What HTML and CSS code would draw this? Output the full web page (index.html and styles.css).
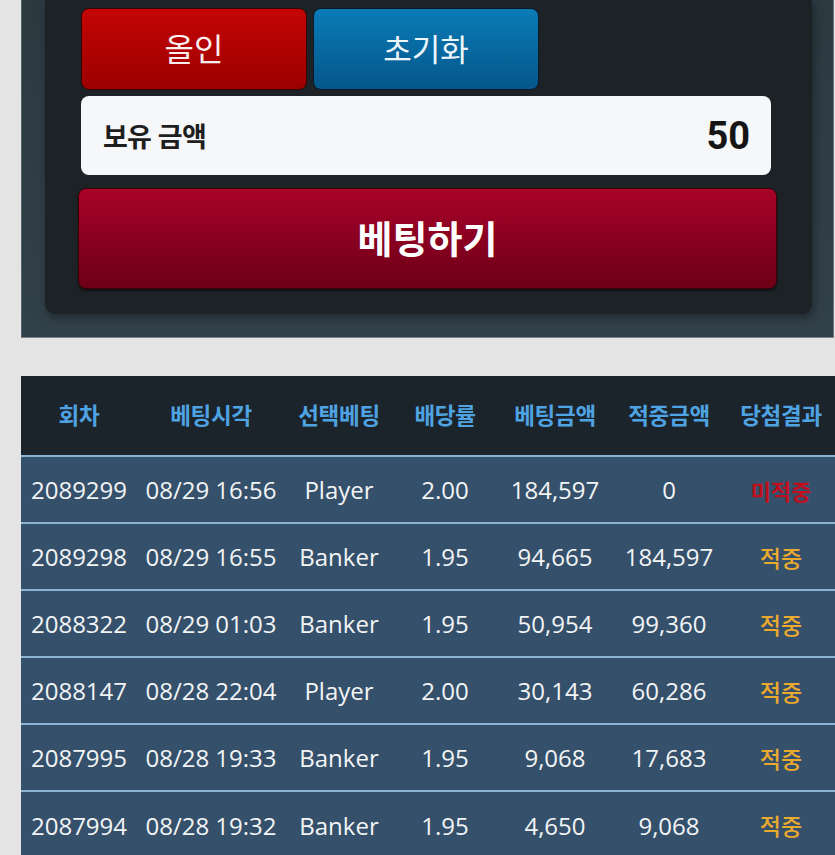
FILE: index.html
```html
<!DOCTYPE html>
<html lang="ko">
<head>
<meta charset="utf-8">
<title>베팅</title>
<link rel="stylesheet" href="styles.css">
</head>
<body>
<div class="page">
  <section class="bet-panel">
    <div class="bet-inner">
      <div class="quick-row">
        <button class="btn btn-allin">올인</button>
        <button class="btn btn-reset">초기화</button>
      </div>
      <div class="balance">
        <span class="balance-label">보유 금액</span>
        <span class="balance-value">50</span>
      </div>
      <button class="btn btn-bet">베팅하기</button>
    </div>
  </section>

  <section class="history">
    <table class="history-table">
      <colgroup>
        <col class="c1"><col class="c2"><col class="c3"><col class="c4"><col class="c5"><col class="c6"><col class="c7">
      </colgroup>
      <thead>
        <tr>
          <th>회차</th><th>베팅시각</th><th>선택베팅</th><th>배당률</th><th>베팅금액</th><th>적중금액</th><th>당첨결과</th>
        </tr>
      </thead>
      <tbody>
        <tr><td>2089299</td><td>08/29 16:56</td><td>Player</td><td>2.00</td><td>184,597</td><td>0</td><td class="lose">미적중</td></tr>
        <tr><td>2089298</td><td>08/29 16:55</td><td>Banker</td><td>1.95</td><td>94,665</td><td>184,597</td><td class="win">적중</td></tr>
        <tr><td>2088322</td><td>08/29 01:03</td><td>Banker</td><td>1.95</td><td>50,954</td><td>99,360</td><td class="win">적중</td></tr>
        <tr><td>2088147</td><td>08/28 22:04</td><td>Player</td><td>2.00</td><td>30,143</td><td>60,286</td><td class="win">적중</td></tr>
        <tr><td>2087995</td><td>08/28 19:33</td><td>Banker</td><td>1.95</td><td>9,068</td><td>17,683</td><td class="win">적중</td></tr>
        <tr><td>2087994</td><td>08/28 19:32</td><td>Banker</td><td>1.95</td><td>4,650</td><td>9,068</td><td class="win">적중</td></tr>
      </tbody>
    </table>
  </section>
</div>
</body>
</html>
```
FILE: styles.css
```css
* { box-sizing: border-box; }

html, body {
  margin: 0;
  padding: 0;
  background: #e4e4e4;
  overflow: hidden;
  font-family: "Open Sans", "Noto Sans CJK KR", sans-serif;
}

.page {
  padding-left: 21px;
  width: 835px;
}

.bet-panel {
  width: 813px;
  background: linear-gradient(180deg, #2c3941 0%, #324049 100%);
  border-left: 1px solid #56636c;
  border-right: 1px solid #6b7780;
  border-bottom: 1px solid #7a858e;
  padding: 0 21px 23px 23px;
}

.bet-inner {
  background: #1c2226;
  border-radius: 0 0 10px 10px;
  box-shadow: 2px 4px 8px rgba(0, 0, 0, 0.35);
  padding: 8px 35px 25px 33px;
  display: flex;
  flex-direction: column;
}

.quick-row {
  display: flex;
  gap: 6px;
  margin-left: 3px;
}

.btn {
  border: 1px solid #1a0606;
  border-radius: 8px;
  color: #fbeeee;
  font-family: "Noto Sans CJK KR", sans-serif;
  cursor: pointer;
  padding: 0 0 4px 0;
  line-height: 1;
}

.btn-allin {
  width: 226px;
  height: 82px;
  font-size: 32px;
  font-weight: 400;
  background: linear-gradient(180deg, #c40404 0%, #9c0000 100%);
  border-color: #3a0404;
}

.btn-reset {
  width: 226px;
  height: 82px;
  font-size: 31px;
  font-weight: 400;
  color: #eef6fb;
  background: linear-gradient(180deg, #0b7bb6 0%, #04578a 100%);
  border-color: #0a1a28;
}

.balance {
  margin: 6px 6px 0 3px;
  height: 79px;
  background: #f6f7f9;
  border-radius: 8px;
  display: flex;
  align-items: center;
  justify-content: space-between;
  padding: 0 21px 0 22px;
}

.balance-label {
  font-family: "Noto Sans CJK KR", sans-serif;
  font-weight: 700;
  font-size: 27px;
  color: #1e1e1e;
  letter-spacing: -0.8px;
}

.balance-value {
  font-family: Roboto, "Liberation Sans", sans-serif;
  font-weight: 700;
  font-size: 38px;
  color: #151515;
}

.btn-bet {
  margin-top: 13px;
  height: 101px;
  width: 100%;
  font-size: 38px;
  font-weight: 700;
  color: #ffffff;
  background: linear-gradient(180deg, #a90229 0%, #8a0020 50%, #6c0017 100%);
  border-color: #3a0008;
  box-shadow: 0 2px 2px rgba(0, 0, 0, 0.5);
}

.history {
  margin-top: 38px;
}

.history-table {
  width: 816px;
  border-collapse: collapse;
  table-layout: fixed;
}

.c1 { width: 116px; }
.c2 { width: 148px; }
.c3 { width: 108px; }
.c4 { width: 104px; }
.c5 { width: 116px; }
.c6 { width: 112px; }
.c7 { width: 112px; }

.history-table thead tr {
  background: #1b242b;
  height: 80px;
}

.history-table th {
  font-family: "Noto Sans CJK KR", sans-serif;
  font-weight: 700;
  font-size: 22.5px;
  color: #4fa3e2;
  text-align: center;
  padding: 0 0 3px 0;
  white-space: nowrap;
  letter-spacing: -0.3px;
}

.history-table tbody tr {
  background: #35506a;
  height: 67px;
  border-top: 2px solid #8cb4d2;
}

.history-table td {
  font-family: "Open Sans", "Noto Sans CJK KR", sans-serif;
  font-size: 24px;
  color: #f2f4f6;
  text-align: center;
  padding: 0;
  white-space: nowrap;
}

.history-table td.win {
  font-family: "Noto Sans CJK KR", sans-serif;
  font-weight: 500;
  font-size: 23px;
  color: #eba92e;
}

.history-table td.lose {
  font-family: "Noto Sans CJK KR", sans-serif;
  font-weight: 700;
  font-size: 22px;
  color: #bf0f1d;
}
```
